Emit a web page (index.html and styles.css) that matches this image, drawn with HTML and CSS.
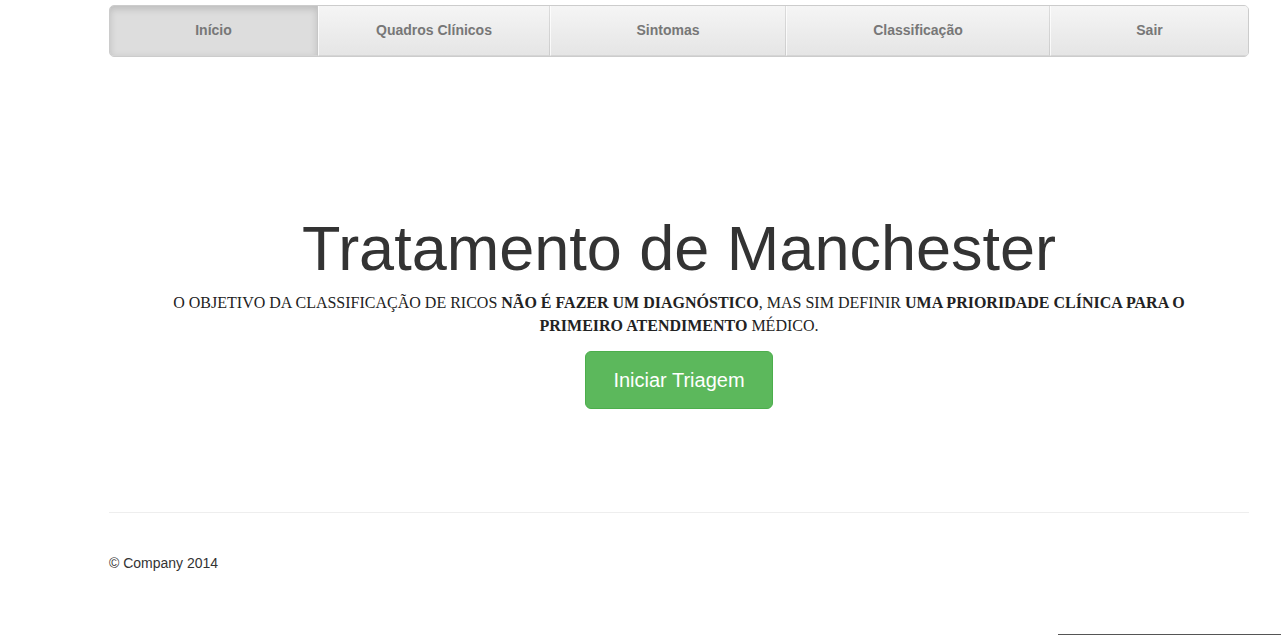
FILE: index.html
```html
<!DOCTYPE html>
<html lang="pt">
<head>
<meta charset="utf-8">
<title>Tratamento de Manchester</title>
<link rel="stylesheet" href="styles.css">
</head>
<body>
<div class="container">
  <nav class="masthead">
    <ul class="nav-justified">
      <li class="active"><a href="#">Início</a></li>
      <li><a href="#">Quadros Clínicos</a></li>
      <li><a href="#">Sintomas</a></li>
      <li><a href="#">Classificação</a></li>
      <li><a href="#">Sair</a></li>
    </ul>
  </nav>
  <div class="jumbotron">
    <h1>Tratamento de Manchester</h1>
    <p class="lead">O OBJETIVO DA CLASSIFICAÇÃO DE RICOS <b>NÃO É FAZER UM DIAGNÓSTICO</b>, MAS SIM DEFINIR <b>UMA PRIORIDADE CLÍNICA PARA O PRIMEIRO ATENDIMENTO</b> MÉDICO.</p>
    <a class="btn-success" href="#">Iniciar Triagem</a>
  </div>
  <hr class="rule">
  <footer class="footer">
    <p>© Company 2014</p>
  </footer>
</div>
<div class="edge-line"></div>
</body>
</html>
```
FILE: styles.css
```css
html, body {
  margin: 0;
  padding: 0;
  background: #fff;
}
body {
  font-family: "Liberation Sans", Arial, Helvetica, sans-serif;
  font-size: 14px;
  line-height: 1.42857;
  color: #333;
}
.container {
  width: 1140px;
  margin-left: 109px;
  padding-top: 5px;
}
.nav-justified {
  display: grid;
  grid-template-columns: 208px 232px 236px 264px 1fr;
  margin: 0;
  padding: 0;
  list-style: none;
  background-color: #eee;
  border: 1px solid #ccc;
  border-radius: 5px;
  box-sizing: border-box;
  overflow: hidden;
}
.nav-justified li {
  display: block;
}
.nav-justified li a {
  display: block;
  padding: 15px 0 14px;
  font-weight: bold;
  color: #777;
  text-align: center;
  text-decoration: none;
  background-color: #e5e5e5;
  background-image: linear-gradient(to bottom, #f5f5f5 0%, #e5e5e5 100%);
  border-bottom: 1px solid #d5d5d5;
  border-left: 1px solid rgba(255,255,255,.75);
  border-right: 1px solid rgba(0,0,0,.1);
}
.nav-justified li:first-child a {
  border-left: 0;
}
.nav-justified li:last-child a {
  border-right: 0;
}
.nav-justified li.active a {
  background-color: #ddd;
  background-image: none;
  box-shadow: inset 0 3px 7px rgba(0,0,0,.15);
}
.jumbotron {
  text-align: center;
  padding-top: 157px;
  padding-bottom: 103px;
}
.jumbotron h1 {
  margin: 0;
  font-size: 63px;
  font-weight: 500;
  line-height: 1.1;
  color: #333;
}
.lead {
  margin: 8px 58px 14px;
  font-family: "Liberation Serif", "Times New Roman", serif;
  font-size: 16px;
  line-height: 23px;
  color: #222;
}
.btn-success {
  display: inline-block;
  padding: 14px 27px;
  font-size: 20px;
  line-height: 28px;
  color: #fff;
  text-decoration: none;
  background-color: #5cb85c;
  border: 1px solid #4cae4c;
  border-radius: 6px;
}
.rule {
  margin: 0;
  border: 0;
  border-top: 1px solid #eee;
}
.footer p {
  margin: 41px 0 0;
}
.edge-line {
  position: fixed;
  right: 0;
  bottom: 0;
  width: 223px;
  height: 1px;
  background: #555;
}
```
